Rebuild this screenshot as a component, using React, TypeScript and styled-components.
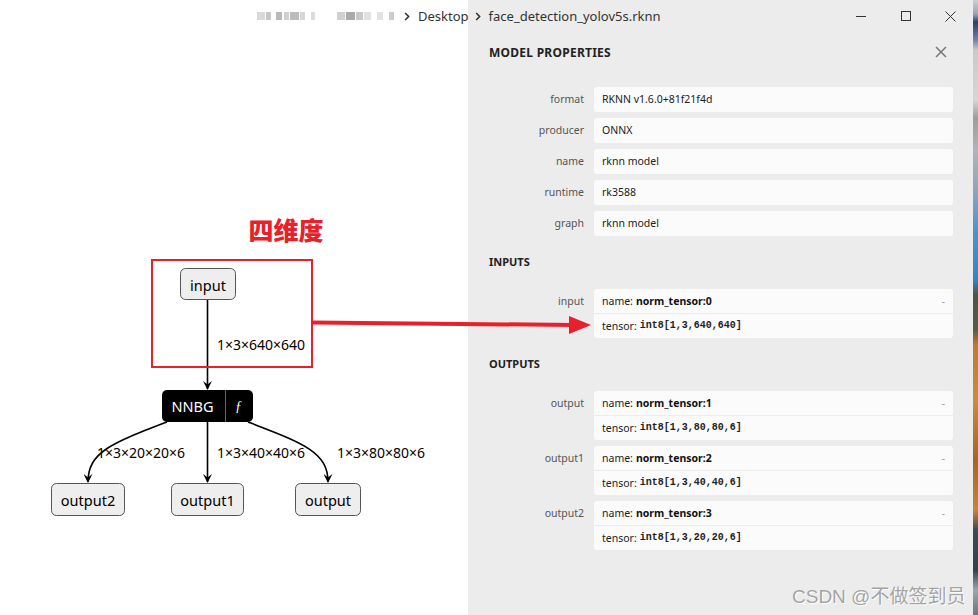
import React from 'react';
import styled, { createGlobalStyle } from 'styled-components';

const GlobalStyle = createGlobalStyle`
  html, body {
    margin: 0;
    padding: 0;
  }
  body {
    width: 978px;
    height: 615px;
    overflow: hidden;
    background: #fff;
    font-family: "Noto Sans", "Open Sans", sans-serif;
    color: #222;
  }
`;

const Screen = styled.div`
  position: relative;
  display: flex;
  width: 978px;
  height: 615px;
  overflow: hidden;
`;

const Window = styled.div`
  flex: 0 0 973px;
  display: flex;
  flex-direction: column;
`;

const Wallpaper = styled.div`
  flex: 1;
  background: linear-gradient(
    to bottom,
    #cfcfcf 0px, #9aa4b4 14px, #2d3f62 22px, #6c84aa 40px, #c9c9c9 50px,
    #d6d6d6 100px, #9c9c9c 118px, #b0b4b8 150px, #8fa6b8 190px,
    #4b95cf 230px, #2f86c6 280px, #4d5444 295px, #575c48 330px,
    #c07a2c 345px, #d08a3a 400px, #a9641f 460px, #c98436 510px,
    #3c4a58 530px, #34404c 570px, #9aa6ae 590px, #6c7880 615px
  );
`;

const TitleBar = styled.div`
  flex: 0 0 32px;
  display: flex;
  align-items: center;
  background: linear-gradient(to right, #fff 468px, #ececec 468px);
  font-family: "Noto Sans", sans-serif;
  font-size: 13px;
  color: #333;
`;

const Crumbs = styled.div`
  flex: 1;
  display: flex;
  align-items: center;
  padding-left: 257px;
`;

const Mosaic = styled.span<{ $w: number; $c: string; $gap?: number }>`
  display: inline-block;
  width: ${({ $w }) => $w}px;
  height: 8px;
  margin-right: ${({ $gap }) => $gap ?? 0}px;
  background: ${({ $c }) => $c};
`;

const Crumb = styled.span`
  white-space: nowrap;
`;

const Chevron = styled.svg`
  width: 6px;
  height: 9px;
  margin: 0 8px 0 6px;
  flex: none;
`;

const WinButton = styled.div`
  width: 45px;
  height: 32px;
  display: flex;
  align-items: center;
  justify-content: center;
`;

const Body = styled.div`
  flex: 1;
  display: flex;
  min-height: 0;
`;

const Canvas = styled.div`
  position: relative;
  flex: 0 0 468px;
  background: #fff;
`;

const GraphSvg = styled.svg`
  display: block;
  font-family: "Noto Sans", sans-serif;
`;

const Panel = styled.div`
  flex: 1;
  display: flex;
  flex-direction: column;
  background: #ececec;
  padding: 0 20px 0 21px;
  font-size: 10.5px;
`;

const PanelHeader = styled.div`
  flex: 0 0 40px;
  display: flex;
  align-items: center;
  justify-content: space-between;
`;

const PanelTitle = styled.div`
  font-size: 12px;
  font-weight: 700;
  letter-spacing: 0.25px;
  color: #222;
  text-transform: uppercase;
`;

const SectionTitle = styled.div`
  height: 20px;
  line-height: 20px;
  margin: 10px 0 17px;
  font-size: 11px;
  font-weight: 700;
  color: #222;
  text-transform: uppercase;
`;

const CloseButton = styled.svg`
  width: 12px;
  height: 12px;
  margin-right: 6px;
`;

const Properties = styled.div`
  margin-top: 15px;
`;

const Row = styled.div`
  display: grid;
  grid-template-columns: 95px 1fr;
  column-gap: 10px;
  margin-bottom: 6px;
`;

const Label = styled.div<{ $line: number }>`
  text-align: right;
  line-height: ${({ $line }) => $line}px;
  color: #555;
  white-space: nowrap;
`;

const ValueBox = styled.div`
  background: #fbfbfb;
  border-radius: 3px;
  overflow: hidden;
`;

const ValueLine = styled.div<{ $h: number; $divider?: boolean }>`
  height: ${({ $h }) => $h}px;
  line-height: ${({ $h }) => $h}px;
  padding: 0 8px;
  display: flex;
  align-items: center;
  color: #222;
  border-top: ${({ $divider }) => ($divider ? '1px solid #ececec' : 'none')};
  white-space: nowrap;
`;

const Strong = styled.b`
  font-weight: 700;
  color: #111;
  margin-left: 3px;
`;

const Code = styled.code`
  font-family: "Liberation Mono", "DejaVu Sans Mono", monospace;
  font-size: 10px;
  font-weight: 700;
  color: #222;
  margin-left: 3px;
`;

const Toggle = styled.span`
  margin-left: auto;
  color: #999;
  font-size: 10px;
`;

const Overlay = styled.svg`
  position: absolute;
  left: 0;
  top: 0;
  pointer-events: none;
`;

const Watermark = styled.div`
  position: absolute;
  left: 792px;
  top: 581px;
  font-family: "Liberation Sans", "Noto Sans CJK SC", sans-serif;
  font-size: 19px;
  color: #a3a3a3;
  text-shadow: 0 0 1px #fff, 1px 1px 0 #fff;
  white-space: nowrap;
`;

interface Prop {
  name: string;
  value: string;
}

interface Tensor {
  label: string;
  name: string;
  type: string;
}

const props: Prop[] = [
  { name: 'format', value: 'RKNN v1.6.0+81f21f4d' },
  { name: 'producer', value: 'ONNX' },
  { name: 'name', value: 'rknn model' },
  { name: 'runtime', value: 'rk3588' },
  { name: 'graph', value: 'rknn model' },
];

const inputs: Tensor[] = [{ label: 'input', name: 'norm_tensor:0', type: 'int8[1,3,640,640]' }];

const outputs: Tensor[] = [
  { label: 'output', name: 'norm_tensor:1', type: 'int8[1,3,80,80,6]' },
  { label: 'output1', name: 'norm_tensor:2', type: 'int8[1,3,40,40,6]' },
  { label: 'output2', name: 'norm_tensor:3', type: 'int8[1,3,20,20,6]' },
];

const mosaic: [number, string, number][] = [
  [8, '#d9d9d9', 1], [5, '#c6c6c6', 5], [6, '#b9b9b9', 2], [5, '#cfcfcf', 1],
  [9, '#bcbcbc', 1], [5, '#d7d7d7', 6], [4, '#dcdcdc', 22], [8, '#d0d0d0', 1],
  [9, '#a9a9a9', 1], [7, '#c8c8c8', 1], [7, '#e0e0e0', 6], [6, '#e3e3e3', 6], [5, '#cdcdcd', 4],
];

const ChevronIcon = () => (
  <Chevron viewBox="0 0 6 9">
    <path d="M1.2 1 L4.6 4.5 L1.2 8" fill="none" stroke="#333" strokeWidth="1.6" />
  </Chevron>
);

const TensorRow: React.FC<{ t: Tensor }> = ({ t }) => (
  <Row>
    <Label $line={24}>{t.label}</Label>
    <ValueBox>
      <ValueLine $h={24}>
        name:<Strong>{t.name}</Strong>
        <Toggle>-</Toggle>
      </ValueLine>
      <ValueLine $h={24} $divider>
        tensor:<Code>{t.type}</Code>
      </ValueLine>
    </ValueBox>
  </Row>
);

const Graph = () => (
  <GraphSvg width={468} height={583} viewBox="0 32 468 583">
    <defs>
      <marker
        id="arrowhead"
        viewBox="0 0 10 10"
        refX="9"
        refY="5"
        markerWidth="9"
        markerHeight="9"
        markerUnits="userSpaceOnUse"
        orient="auto"
      >
        <path d="M0 0 L10 5 L0 10 L4 5 z" fill="#000" />
      </marker>
    </defs>

    <g fill="none" stroke="#000" strokeWidth="1.6">
      <path d="M207.5 300 L207.5 389" markerEnd="url(#arrowhead)" />
      <path d="M167 422 C112 443 88 452 88 482" markerEnd="url(#arrowhead)" />
      <path d="M207.5 422 L207.5 482" markerEnd="url(#arrowhead)" />
      <path d="M248 422 C303 443 328 452 328 482" markerEnd="url(#arrowhead)" />
    </g>

    <g fontSize="14" fill="#000" dominantBaseline="central">
      <text x="217" y="344">1×3×640×640</text>
      <text x="97" y="452">1×3×20×20×6</text>
      <text x="217" y="452">1×3×40×40×6</text>
      <text x="337" y="452">1×3×80×80×6</text>
    </g>

    <g fill="#eee" stroke="#555" strokeWidth="1">
      <rect x="180.5" y="268.5" width="55" height="31" rx="5" />
      <rect x="51.5" y="483.5" width="73" height="32" rx="5" />
      <rect x="171.5" y="483.5" width="72" height="32" rx="5" />
      <rect x="295.5" y="483.5" width="65" height="32" rx="5" />
    </g>
    <g fontSize="14.5" fill="#000" textAnchor="middle" dominantBaseline="central">
      <text x="208" y="284.5">input</text>
      <text x="88" y="500">output2</text>
      <text x="207.5" y="500">output1</text>
      <text x="328" y="500">output</text>
    </g>

    <rect x="162" y="390" width="91" height="32" rx="5" fill="#000" />
    <line x1="225.5" y1="390" x2="225.5" y2="422" stroke="#666" strokeWidth="1" />
    <text x="192.5" y="406" fontSize="14.5" fill="#fff" textAnchor="middle" dominantBaseline="central">
      NNBG
    </text>
    <text
      x="238.5"
      y="406"
      fontSize="14"
      fontStyle="italic"
      fontFamily="'Liberation Serif', serif"
      fill="#fff"
      textAnchor="middle"
      dominantBaseline="central"
    >
      ƒ
    </text>
  </GraphSvg>
);

const App: React.FC = () => (
  <Screen>
    <GlobalStyle />
    <Window>
      <TitleBar>
        <Crumbs>
          {mosaic.map(([w, c, g], i) => (
            <Mosaic key={i} $w={w} $c={c} $gap={g} />
          ))}
          <ChevronIcon />
          <Crumb>Desktop</Crumb>
          <ChevronIcon />
          <Crumb>face_detection_yolov5s.rknn</Crumb>
        </Crumbs>
        <WinButton>
          <svg width="10" height="10" viewBox="0 0 10 10">
            <path d="M0 5.5 H10" stroke="#333" strokeWidth="1" />
          </svg>
        </WinButton>
        <WinButton>
          <svg width="10" height="10" viewBox="0 0 10 10">
            <rect x="0.5" y="0.5" width="9" height="9" fill="none" stroke="#333" strokeWidth="1" />
          </svg>
        </WinButton>
        <WinButton>
          <svg width="11" height="11" viewBox="0 0 11 11">
            <path d="M0.5 0.5 L10.5 10.5 M10.5 0.5 L0.5 10.5" stroke="#333" strokeWidth="1" />
          </svg>
        </WinButton>
      </TitleBar>

      <Body>
        <Canvas>
          <Graph />
        </Canvas>

        <Panel>
          <PanelHeader>
            <PanelTitle>Model Properties</PanelTitle>
            <CloseButton viewBox="0 0 12 12">
              <path d="M1 1 L11 11 M11 1 L1 11" stroke="#777" strokeWidth="1.5" />
            </CloseButton>
          </PanelHeader>

          <Properties>
            {props.map(p => (
              <Row key={p.name}>
                <Label $line={25}>{p.name}</Label>
                <ValueBox>
                  <ValueLine $h={25}>{p.value}</ValueLine>
                </ValueBox>
              </Row>
            ))}
          </Properties>

          <SectionTitle>Inputs</SectionTitle>
          {inputs.map(t => (
            <TensorRow key={t.label} t={t} />
          ))}

          <SectionTitle>Outputs</SectionTitle>
          {outputs.map(t => (
            <TensorRow key={t.label} t={t} />
          ))}
        </Panel>
      </Body>
    </Window>
    <Wallpaper />

    <Overlay width={978} height={615} viewBox="0 0 978 615">
      <text
        x="286"
        y="229"
        fontSize="25"
        fontWeight="900"
        fill="#e8202b"
        textAnchor="middle"
        dominantBaseline="central"
        fontFamily="'Noto Sans CJK SC', sans-serif"
      >
        四维度
      </text>
      <rect x="152" y="260" width="160" height="107" fill="none" stroke="#e8202b" strokeWidth="2" />
      <path d="M312 322.5 L574 325" stroke="#e8202b" strokeWidth="4" fill="none" />
      <path d="M569 316 L591 325 L569 334 Z" fill="#e8202b" />
    </Overlay>

    <Watermark>CSDN @不做签到员</Watermark>
  </Screen>
);

export default App;
